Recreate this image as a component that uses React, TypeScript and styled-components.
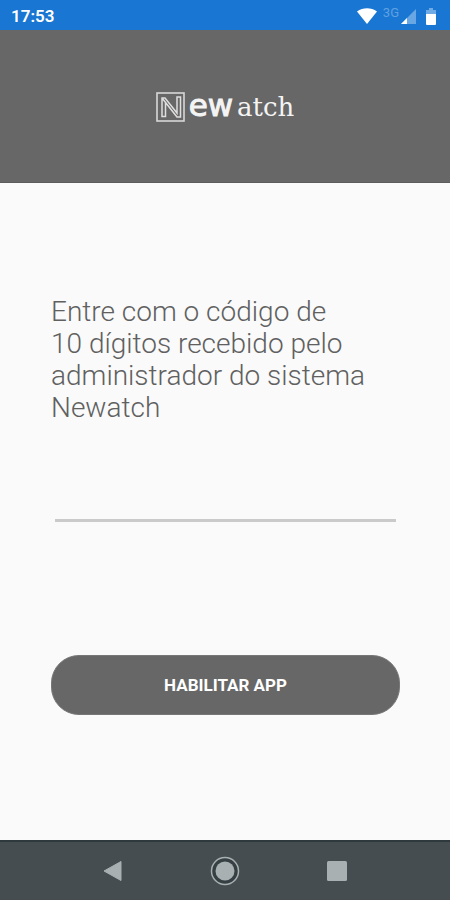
import React from "react";
import styled, { createGlobalStyle } from "styled-components";

const GlobalStyle = createGlobalStyle`
  * { box-sizing: border-box; }
  body { margin: 0; background: #fafafa; font-family: Roboto, sans-serif; }
`;

const Screen = styled.div`
  display: flex;
  flex-direction: column;
  min-height: 100vh;
`;

const StatusBar = styled.div`
  display: flex;
  align-items: center;
  justify-content: space-between;
  height: 30px;
  padding: 2px 14px 0 11px;
  background: #1976d2;
  color: #fff;
`;

const Clock = styled.time`
  font-size: 17px;
  line-height: 20px;
  font-weight: 600;
`;

const StatusIcons = styled.div`
  display: flex;
  align-items: center;
`;

const Network = styled.span`
  margin: 0 2px 6px 6px;
  font-size: 13px;
  line-height: 12px;
  color: #5fa1e2;
`;

const BatteryIcon = styled.svg`
  margin-left: 10px;
`;

const Header = styled.header`
  display: flex;
  align-items: center;
  justify-content: center;
  height: 153px;
  padding-top: 2px;
  background: #676767;
  border-bottom: 1px solid #5c5c5c;
`;

const Logo = styled.h1`
  display: flex;
  align-items: baseline;
  height: 30px;
  margin: 0;
  color: #f4f4f4;
  font-weight: 400;
  line-height: 26px;
`;

const LogoMark = styled.svg`
  align-self: center;
  margin-right: 3px;
`;

const LogoSans = styled.span`
  font-family: "DejaVu Sans", sans-serif;
  font-weight: 400;
  font-size: 31px;
  -webkit-text-stroke: 1px #f4f4f4;
`;

const LogoSerif = styled.span`
  margin-left: 4px;
  font-family: "DejaVu Serif", serif;
  font-size: 26px;
`;

const Form = styled.form`
  display: flex;
  flex: 1;
  flex-direction: column;
  padding: 113px 50px 0 51px;
`;

const Prompt = styled.label`
  max-width: 340px;
  color: #606060;
  font-size: 28px;
  font-weight: 330;
  line-height: 32px;
`;

const CodeInput = styled.input`
  height: 54px;
  margin: 44px 4px 0;
  padding: 0;
  border: 0;
  border-bottom: 3px solid #cacaca;
  border-radius: 0;
  outline: 0;
  background: transparent;
  color: #555;
  font: 28px Roboto, sans-serif;
`;

const SubmitButton = styled.button`
  height: 60px;
  margin-top: 133px;
  border: 1px solid #777;
  border-radius: 28px;
  background: #676767;
  color: #fff;
  font: 700 17px Roboto, sans-serif;
`;

const NavBar = styled.nav`
  display: flex;
  align-items: center;
  justify-content: center;
  gap: 80px;
  height: 60px;
  border-top: 2px solid #2e393d;
  background: #454d51;
`;

const NavButton = styled.button`
  display: grid;
  place-items: center;
  width: 32px;
  height: 32px;
  padding: 0;
  border: 0;
  background: none;
`;

export default function App() {
  return (
    <Screen>
      <GlobalStyle />
      <StatusBar>
        <Clock>17:53</Clock>
        <StatusIcons>
          <svg width="20" height="16" viewBox="0 0 20 16" aria-hidden="true">
            <path d="M0 3.6C6 -.8 14 -.8 20 3.6L10 16Z" fill="#fff" />
          </svg>
          <Network>3G</Network>
          <svg width="15" height="15" viewBox="0 0 15 15" aria-hidden="true">
            <path d="M15 0V15H0Z" fill="#69a7e4" />
            <path d="M6 9V15H0Z" fill="#fff" />
          </svg>
          <BatteryIcon width="10" height="17" viewBox="0 0 10 17" aria-hidden="true">
            <path d="M3 0h4v2h3v6H0V2h3Z" fill="#70abe5" />
            <path d="M0 6h10v10q0 1-1 1H1q-1 0-1-1Z" fill="#fff" />
          </BatteryIcon>
        </StatusIcons>
      </StatusBar>
      <Header>
        <Logo aria-label="Newatch">
          <LogoMark width="30" height="30" viewBox="0 0 30 30" fill="none" aria-hidden="true">
            <rect x="1" y="1" width="27" height="28" stroke="#d8d8d8" strokeWidth="1.6" />
            <path
              d="M6 24.5V6H9L21 21V5H24.5V25H21L9.5 10.5V24.5Z M6 6L21 25"
              stroke="#dedede"
              strokeWidth="1.5"
            />
          </LogoMark>
          <LogoSans>ew</LogoSans>
          <LogoSerif>atch</LogoSerif>
        </Logo>
      </Header>
      <Form onSubmit={(event) => event.preventDefault()}>
        <Prompt htmlFor="code">
          Entre com o código de
          <br />
          10 dígitos recebido pelo administrador do sistema Newatch
        </Prompt>
        <CodeInput id="code" type="text" maxLength={10} autoComplete="off" />
        <SubmitButton type="submit">HABILITAR APP</SubmitButton>
      </Form>
      <NavBar>
        <NavButton type="button" aria-label="Voltar">
          <svg width="20" height="22" viewBox="0 0 20 22">
            <path d="M18 1.5V20.5L1 11Z" fill="#a9b0b2" stroke="#a9b0b2" strokeLinejoin="round" />
          </svg>
        </NavButton>
        <NavButton type="button" aria-label="Início">
          <svg width="30" height="30" viewBox="0 0 30 30">
            <circle cx="15" cy="15" r="13.5" fill="#363f43" stroke="#a9b0b2" strokeWidth="1.5" />
            <circle cx="15" cy="15" r="9.5" fill="#a9b0b2" />
          </svg>
        </NavButton>
        <NavButton type="button" aria-label="Recentes">
          <svg width="20" height="20" viewBox="0 0 20 20">
            <rect width="20" height="20" rx="1.5" fill="#a9b0b2" />
          </svg>
        </NavButton>
      </NavBar>
    </Screen>
  );
}
